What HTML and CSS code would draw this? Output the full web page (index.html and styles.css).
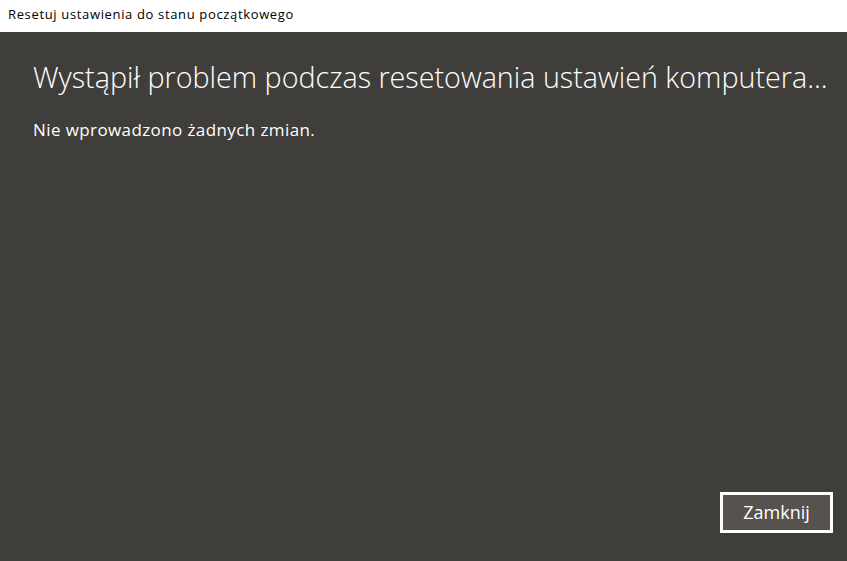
FILE: index.html
```html
<!DOCTYPE html>
<html lang="pl">

<head>
    <meta charset="UTF-8">
    <meta name="viewport" content="width=device-width, initial-scale=1.0">
    <title>Resetuj ustawienia do stanu początkowego</title>
    <link rel="stylesheet" href="styles.css">
</head>

<body>

    <div class="titlebar">Resetuj ustawienia do stanu początkowego</div>

    <div class="content">
        <h1>Wystąpił problem podczas resetowania ustawień komputera...</h1>

        <p>Nie wprowadzono żadnych zmian.</p>

        <div class="actions">
            <button class="btn">Zamknij</button>
        </div>
    </div>

</body>

</html>
```

FILE: styles.css
```css
/* Base Styles */
html,
body {
    margin: 0;
    padding: 0;
    height: 100%;
}

body {
    display: flex;
    flex-direction: column;
    font-family: "Open Sans", "Noto Sans", sans-serif;
    background: #ffffff;
    overflow: hidden;
}

.titlebar {
    height: 32px;
    padding-left: 8px;
    line-height: 28px;
    font-size: 13px;
    letter-spacing: 0.65px;
    color: #000;
    background: #fff;
    white-space: nowrap;
}

.content {
    flex: 1;
    display: flex;
    flex-direction: column;
    background: #403e3b;
    color: #fff;
    padding: 0 14px 28px 33px;
}

h1 {
    margin: 25px 0 0;
    font-size: 28.7px;
    font-weight: 300;
    line-height: 40px;
    white-space: nowrap;
}

p {
    margin: 22px 0 0;
    font-size: 17px;
    letter-spacing: 0.4px;
    line-height: 22px;
}

.actions {
    margin-top: auto;
    display: flex;
    justify-content: flex-end;
}

.btn {
    width: 113px;
    height: 41px;
    border: 3px solid #fff;
    background: #56524e;
    color: #fff;
    font-family: inherit;
    font-size: 18px;
    padding: 0 0 2px;
    cursor: pointer;
}
```
